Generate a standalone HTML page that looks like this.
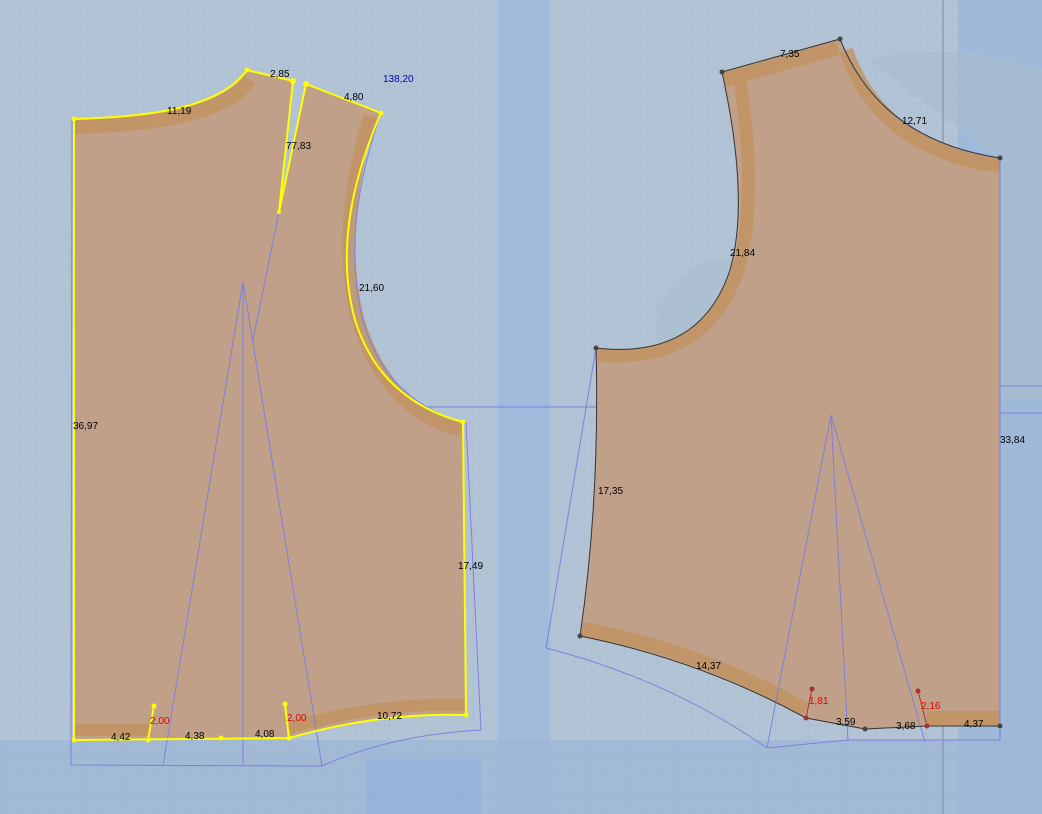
<!DOCTYPE html>
<html><head><meta charset="utf-8"><style>
html,body{margin:0;padding:0;width:1042px;height:814px;overflow:hidden;background:#b1c3d5}
svg{display:block}
text{font-family:"Liberation Sans",sans-serif;font-size:10px;fill:#000}
</style></head><body>
<svg width="1042" height="814" viewBox="0 0 1042 814" xmlns="http://www.w3.org/2000/svg">
<defs>
<pattern id="g" width="16.8" height="16.8" patternUnits="userSpaceOnUse" x="3" y="3">
<path d="M16.8 0V16.8H0" fill="none" stroke="#a6b8cb" stroke-width="1"/>
</pattern>
</defs>
<rect width="1042" height="814" fill="#b1c3d5"/>
<rect width="1042" height="814" fill="url(#g)"/>
<rect x="498" y="0" width="52" height="814" fill="#9ebadc" opacity="0.85"/>
<rect x="958" y="0" width="84" height="814" fill="#9cb7d8" opacity="0.85"/>
<rect x="0" y="740" width="1042" height="74" fill="#9db6d6" opacity="0.7"/>
<rect x="366" y="760" width="115" height="54" fill="#92b2dc" opacity="0.8"/>
<path d="M870 60 Q960 40 1042 70 V400 H1000 V160 Z" fill="#a9bccf" opacity="0.6"/>
<path d="M660 300 Q700 250 740 260 L740 440 L650 440 Z" fill="#aabdd0" opacity="0.5"/>
<line x1="943" y1="0" x2="943" y2="814" stroke="#7c8ca8" stroke-width="1"/>
<line x1="420" y1="407" x2="600" y2="407" stroke="#7d7fe0" stroke-width="1"/>
<line x1="1000" y1="386" x2="1042" y2="386" stroke="#7d7fe0"/>
<line x1="1000" y1="413" x2="1042" y2="413" stroke="#7d7fe0"/>

<!-- LEFT PIECE -->
<path d="M74 119 C150 117 220 108 247 70 L293 81 L279 212 L306 84 L381 113 Q330 230 355 320 Q380 400 463 422 L466 715 Q380 712 289 738 L74 740 Z" fill="#c0a088"/>
<path d="M75 127 C150 125 225 115 250 80" fill="none" stroke="#c0925f" stroke-width="14" opacity="0.8"/>
<path d="M370 116 Q335 230 358 320 Q385 410 460 430" fill="none" stroke="#c0925f" stroke-width="13" opacity="0.8"/>
<path d="M74 730 L150 730 M289 728 Q380 702 466 705" fill="none" stroke="#c0925f" stroke-width="12" opacity="0.8"/>
<g fill="none" stroke="#7f7fe0" stroke-width="1">
<path d="M71 765 L72 118 M71 765 L322 766 Q390 735 481 730 L466 422"/>
<path d="M163 765 L243 282 L322 766 M243 282 V766"/>
<path d="M253 340 L279 212 L293 81 M381 113 Q340 230 363 320 Q385 400 463 422"/>
</g>
<g fill="none" stroke="#ffff00" stroke-width="2">
<path d="M74 119 C150 117 220 108 247 70 L293 81 L279 212 L306 84 L381 113 Q330 230 355 320 Q380 400 463 422 L466 715 Q380 712 289 738 L74 740 Z"/>
<path d="M148 740 L154 706 M289 738 L285 704"/>
</g>
<g fill="#ffff00">
<circle cx="74" cy="119" r="2.5"/><circle cx="247" cy="70" r="2.5"/><circle cx="293" cy="81" r="3"/><circle cx="306" cy="84" r="3"/><circle cx="381" cy="113" r="2.5"/><circle cx="279" cy="212" r="2"/><circle cx="463" cy="422" r="2.5"/><circle cx="466" cy="715" r="2.5"/><circle cx="289" cy="738" r="2.5"/><circle cx="221" cy="738" r="2.5"/><circle cx="148" cy="740" r="2.5"/><circle cx="74" cy="740" r="2.5"/><circle cx="154" cy="706" r="2.5"/><circle cx="285" cy="704" r="2.5"/>
</g>
<text x="167" y="114">11,19</text>
<text x="270" y="77">2,85</text>
<text x="344" y="100">4,80</text>
<text x="383" y="82" style="fill:#0000c8">138,20</text>
<text x="286" y="149">77,83</text>
<text x="359" y="291">21,60</text>
<text x="73" y="429">36,97</text>
<text x="458" y="569">17,49</text>
<text x="377" y="719">10,72</text>
<text x="111" y="740">4,42</text>
<text x="150" y="724" style="fill:#e00000">2,00</text>
<text x="185" y="739">4,38</text>
<text x="255" y="737">4,08</text>
<text x="287" y="721" style="fill:#e00000">2,00</text>

<!-- RIGHT PIECE -->
<path d="M722 72 L840 39 Q880 140 1000 158 L1000 726 L927 726 L865 729 L806 718 Q700 660 580 636 Q600 500 596 348 Q700 360 730 270 Q750 200 722 72 Z" fill="#c0a088"/>
<path d="M724 80 L838 48 M846 50 Q880 150 1000 166" fill="none" stroke="#c0925f" stroke-width="14" opacity="0.8"/>
<path d="M740 80 Q758 200 738 270 Q705 365 598 355" fill="none" stroke="#c0925f" stroke-width="13" opacity="0.8"/>
<path d="M582 629 Q700 650 806 710 M927 718 L1000 718" fill="none" stroke="#c0925f" stroke-width="14" opacity="0.8"/>
<g fill="none" stroke="#7f7fe0" stroke-width="1">
<path d="M546 648 L596 348 M546 648 Q670 680 767 748 L848 740 L1000 740 V158 M840 39 Q880 140 1000 158"/>
<path d="M767 748 L831 415 L925 742 M831 415 L848 740"/>
</g>
<g fill="none" stroke="#333" stroke-width="1">
<path d="M722 72 L840 39 Q880 140 1000 158 M1000 726 L927 726 L865 729 L806 718 Q700 660 580 636 Q600 500 596 348 Q700 360 730 270 Q750 200 722 72"/>
</g>
<g fill="none" stroke="#b03030" stroke-width="1"><path d="M806 718 L812 689 M927 726 L918 691"/></g>
<g fill="#444"><circle cx="722" cy="72" r="2.5"/><circle cx="840" cy="39" r="2.5"/><circle cx="1000" cy="158" r="2.5"/><circle cx="596" cy="348" r="2.5"/><circle cx="580" cy="636" r="2.5"/><circle cx="865" cy="729" r="2.5"/><circle cx="1000" cy="726" r="2.5"/></g>
<g fill="#a83030"><circle cx="806" cy="718" r="2.5"/><circle cx="812" cy="689" r="2.5"/><circle cx="927" cy="726" r="2.5"/><circle cx="918" cy="691" r="2.5"/></g>
<text x="780" y="57">7,35</text>
<text x="902" y="124">12,71</text>
<text x="730" y="256">21,84</text>
<text x="1000" y="443">33,84</text>
<text x="598" y="494">17,35</text>
<text x="696" y="669">14,37</text>
<text x="809" y="704" style="fill:#e00000">1,81</text>
<text x="836" y="725">3,59</text>
<text x="896" y="729">3,68</text>
<text x="964" y="727">4,37</text>
<text x="921" y="709" style="fill:#e00000">2,16</text>
</svg>
</body></html>
